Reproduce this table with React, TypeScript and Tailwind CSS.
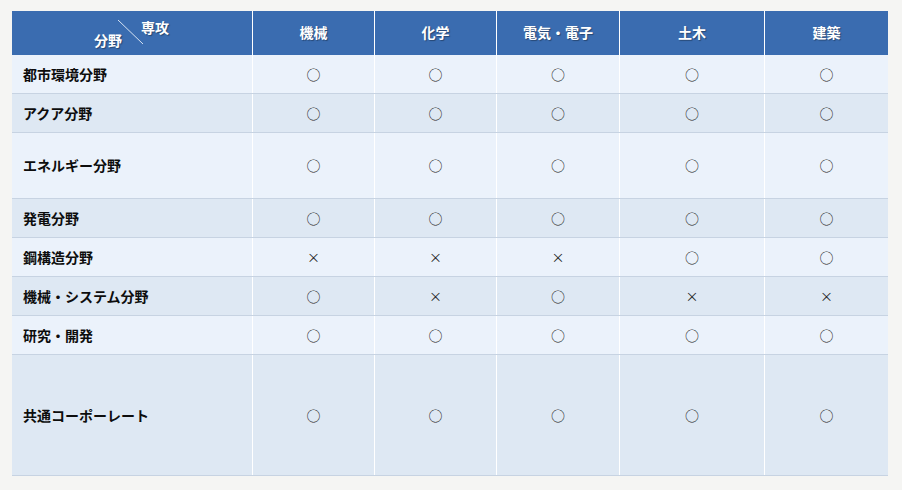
const cols = ["機械", "化学", "電気・電子", "土木", "建築"];

const rows: { label: string; marks: string[]; h: string }[] = [
  { label: "都市環境分野", marks: ["○", "○", "○", "○", "○"], h: "h-[39px]" },
  { label: "アクア分野", marks: ["○", "○", "○", "○", "○"], h: "h-[39px]" },
  { label: "エネルギー分野", marks: ["○", "○", "○", "○", "○"], h: "h-[66px]" },
  { label: "発電分野", marks: ["○", "○", "○", "○", "○"], h: "h-[39px]" },
  { label: "鋼構造分野", marks: ["×", "×", "×", "○", "○"], h: "h-[39px]" },
  { label: "機械・システム分野", marks: ["○", "×", "○", "×", "×"], h: "h-[39px]" },
  { label: "研究・開発", marks: ["○", "○", "○", "○", "○"], h: "h-[39px]" },
  { label: "共通コーポーレート", marks: ["○", "○", "○", "○", "○"], h: "h-[121px]" },
];

const grid = "grid grid-cols-[240px_122px_122px_123px_145px_124px]";
const font = { fontFamily: '"Noto Sans CJK JP", "Noto Sans", sans-serif' };

export default function App() {
  return (
    <div className="min-h-screen w-full bg-[#f5f5f3] pt-[11px] pl-[12px]" style={font}>
      <div className="w-[876px]">
        {/* header */}
        <div className={`${grid} h-[44px] bg-[#3a6cb0] text-white text-[14px] font-bold [text-shadow:1px_1px_1px_rgba(0,0,0,0.35)]`}>
          <div className="relative">
            <span className="absolute left-[129px] top-[9px] leading-none">専攻</span>
            <span className="absolute left-[82px] top-[22px] leading-none">分野</span>
            <svg className="absolute left-0 top-0" width="240" height="44">
              <line x1="106" y1="9" x2="131" y2="33" stroke="#d5e2f3" strokeWidth="1" />
            </svg>
          </div>
          {cols.map((c) => (
            <div key={c} className="flex items-center justify-center border-l border-white pb-[1px]">
              {c}
            </div>
          ))}
        </div>

        {/* body */}
        {rows.map((r, i) => (
          <div
            key={r.label}
            className={`${grid} ${r.h} border-b border-[#c7d3e2] ${i % 2 === 0 ? "bg-[#ebf2fb]" : "bg-[#dee8f3]"}`}
          >
            <div className="flex items-center pl-[11px] text-[14px] font-bold text-[#0d0d0d]">{r.label}</div>
            {r.marks.map((m, j) => (
              <div
                key={j}
                className={`flex items-center justify-center border-l border-white text-[#222] ${m === "○" ? "text-[14px]" : "text-[13px]"}`}
              >
                {m}
              </div>
            ))}
          </div>
        ))}
      </div>
    </div>
  );
}
